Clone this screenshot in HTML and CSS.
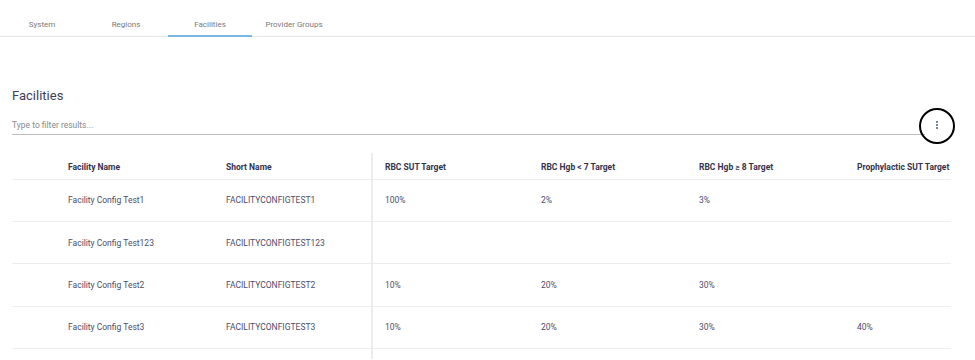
FILE: index.html
```html
<!DOCTYPE html>
<html>
	<head>
		<meta charset="utf-8">
		<title>Facilities</title>
		<link rel="stylesheet" href="styles.css">
	</head>
	<body>
		<nav class="tabs">
			<a class="tab">System</a>
			<a class="tab">Regions</a>
			<a class="tab active">Facilities</a>
			<a class="tab">Provider Groups</a>
		</nav>
		<div class="main">
			<h2 class="title">Facilities</h2>
			<div class="filter-bar">
				<input class="filter" type="text" placeholder="Type to filter results...">
				<button class="menu-btn" title="Columns">
					<svg width="4" height="8" viewBox="0 0 4 8"><circle cx="2" cy="1" r="0.9"/><circle cx="2" cy="4" r="0.9"/><circle cx="2" cy="7" r="0.9"/></svg>
					<span class="ring"></span>
				</button>
			</div>
			<table class="grid">
				<colgroup>
					<col class="c-select">
					<col class="c-wide">
					<col class="c-wide">
					<col class="c-num">
					<col class="c-wide">
					<col class="c-wide">
					<col>
				</colgroup>
				<thead>
					<tr>
						<th></th>
						<th>Facility Name</th>
						<th>Short Name</th>
						<th class="split">RBC SUT Target</th>
						<th>RBC Hgb &lt; 7 Target</th>
						<th>RBC Hgb &ge; 8 Target</th>
						<th>Prophylactic SUT Target</th>
					</tr>
				</thead>
				<tbody>
					<tr>
						<td></td>
						<td>Facility Config Test1</td>
						<td>FACILITYCONFIGTEST1</td>
						<td class="split">100%</td>
						<td>2%</td>
						<td>3%</td>
						<td></td>
					</tr>
					<tr>
						<td></td>
						<td>Facility Config Test123</td>
						<td>FACILITYCONFIGTEST123</td>
						<td class="split"></td>
						<td></td>
						<td></td>
						<td></td>
					</tr>
					<tr>
						<td></td>
						<td>Facility Config Test2</td>
						<td>FACILITYCONFIGTEST2</td>
						<td class="split">10%</td>
						<td>20%</td>
						<td>30%</td>
						<td></td>
					</tr>
					<tr>
						<td></td>
						<td>Facility Config Test3</td>
						<td>FACILITYCONFIGTEST3</td>
						<td class="split">10%</td>
						<td>20%</td>
						<td>30%</td>
						<td>40%</td>
					</tr>
					<tr class="partial">
						<td></td>
						<td></td>
						<td></td>
						<td class="split"></td>
						<td></td>
						<td></td>
						<td></td>
					</tr>
				</tbody>
			</table>
		</div>
	</body>
</html>
```

FILE: styles.css
```css
* {
	margin: 0;
	padding: 0;
	box-sizing: border-box;
}
html,body {
	width: 100%;
	height: 100%;
	background: #fff;
	font-family: Roboto, "Liberation Sans", sans-serif;
	color: #4a4a66;
	overflow: hidden;
}

.tabs {
	display: flex;
	height: 37px;
	padding-top: 9px;
	border-bottom: 1px solid #e6e6e6;
}
.tab {
	width: 84px;
	height: 28px;
	padding-top: 11px;
	text-align: center;
	font-size: 8px;
	color: #7a7a7a;
	border-bottom: 2px solid transparent;
}
.tab.active {
	border-bottom-color: #78b8e0;
}

.main {
	padding: 0 12px;
}
.title {
	margin-top: 51px;
	font-size: 13px;
	font-weight: 400;
	color: #3e3e58;
	line-height: 16px;
}

.filter-bar {
	display: flex;
	align-items: flex-end;
	width: 937px;
	margin-top: 11px;
}
.filter {
	flex: 1;
	height: 20px;
	border: none;
	border-bottom: 1px solid #bdbdbd;
	font-family: inherit;
	font-size: 8.5px;
	color: #4a4a66;
	outline: none;
}
.filter::placeholder {
	color: #8a8a8a;
}
.menu-btn {
	position: relative;
	width: 24px;
	height: 20px;
	border: none;
	background: none;
	display: flex;
	align-items: center;
	justify-content: center;
	fill: #3e4a7a;
}
.ring {
	position: absolute;
	left: -6px;
	top: -7px;
	width: 36px;
	height: 36px;
	border: 2.5px solid #000;
	border-radius: 50%;
}

.grid {
	margin-top: 18px;
	width: 939px;
	border-collapse: collapse;
	table-layout: fixed;
	font-size: 8.5px;
}
.c-select { width: 44px; }
.c-wide { width: 158px; }
.c-num { width: 158px; }
.grid th,
.grid td {
	text-align: left;
	padding-left: 12px;
	white-space: nowrap;
	border-bottom: 1px solid #ededed;
}
.grid th {
	height: 26px;
	padding-top: 3px;
	font-weight: 700;
	color: #33334d;
}
.grid th:nth-child(5),
.grid td:nth-child(5),
.grid th:nth-child(6),
.grid td:nth-child(6),
.grid th:nth-child(7),
.grid td:nth-child(7) {
	padding-left: 11px;
}
.grid td {
	height: 42.4px;
	color: #4d4d6a;
}
.grid .partial td {
	height: 10px;
	border-bottom: none;
}
.grid .split {
	border-left: 2px solid #ececec;
}
```
